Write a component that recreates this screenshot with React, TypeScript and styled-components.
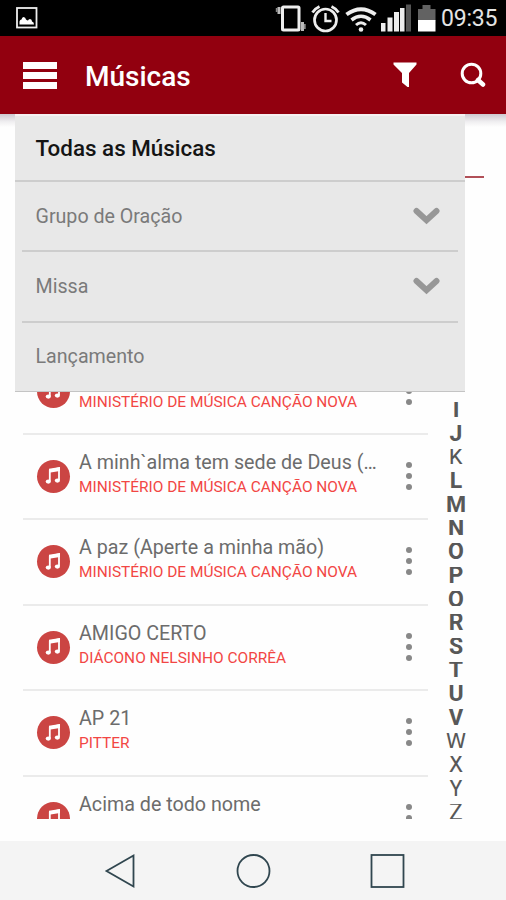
import React from 'react';
import styled, { createGlobalStyle } from 'styled-components';

const GlobalStyle = createGlobalStyle`
  * { box-sizing: border-box; }
  body { margin: 0; background: #fff; font-family: Roboto, "Liberation Sans", sans-serif; }
`;

const Screen = styled.div`
  width: 506px;
  height: 900px;
  display: flex;
  flex-direction: column;
  overflow: hidden;
  background: #fefefe;
`;

const StatusBar = styled.div`
  flex: 0 0 36px;
  display: flex;
  align-items: center;
  justify-content: space-between;
  padding: 0 9px 0 16px;
  background: #000;
`;

const StatusRight = styled.div`
  display: flex;
  align-items: center;
  height: 36px;
`;

const Clock = styled.span`
  width: 56px;
  margin-left: 5px;
  color: #e4e4e4;
  font-size: 23px;
  line-height: 36px;
  letter-spacing: -0.2px;
  padding-top: 2px;
  white-space: nowrap;
`;

const Header = styled.header`
  flex: 0 0 78px;
  display: flex;
  align-items: center;
  padding: 0 20px 0 23px;
  background: #92000f;
`;

const Burger = styled.button`
  display: flex;
  flex-direction: column;
  gap: 3px;
  width: 34px;
  padding: 0;
  border: 0;
  background: none;
`;

const BurgerBar = styled.span`
  height: 7px;
  background: #fff;
`;

const PageTitle = styled.h1`
  flex: 1;
  margin: 3px 0 0 28px;
  color: #fff;
  font-size: 28px;
  font-weight: 500;
  line-height: 40px;
`;

const HeaderIcons = styled.div`
  display: flex;
  align-items: center;
  gap: 43px;
`;

const Main = styled.main`
  flex: 0 0 705px;
  position: relative;
  display: flex;
  padding: 0 22px 0 23px;
  overflow: hidden;
`;

const HeaderShade = styled.div`
  position: absolute;
  top: 0;
  left: 0;
  right: 0;
  height: 13px;
  background: linear-gradient(#cdc9d0, #f0eff1 60%, #fefefe);
`;

const TabUnderline = styled.div`
  position: absolute;
  top: 62px;
  left: 23px;
  right: 22px;
  height: 2px;
  background: #b15058;
`;

const SongList = styled.ul`
  width: 405px;
  margin: 0;
  padding: 233.6px 0 0;
  list-style: none;
`;

const SongRow = styled.li`
  display: flex;
  height: 85.4px;
  padding: 17px 16px 0 14px;
  border-top: 2px solid #ebebeb;
`;

const Disc = styled.div`
  flex: 0 0 33px;
  height: 33px;
  margin-top: 8px;
  border-radius: 50%;
  background: #cb4543;
  display: flex;
  align-items: center;
  justify-content: center;
`;

const SongText = styled.div`
  flex: 1;
  min-width: 0;
  padding-left: 9px;
`;

const SongTitle = styled.div`
  height: 25px;
  color: #6c6c6c;
  font-size: 19.7px;
  line-height: 22px;
  white-space: nowrap;
`;

const Artist = styled.div`
  color: #f24644;
  font-size: 15.45px;
  line-height: 20px;
  white-space: nowrap;
`;

const MoreDots = styled.div`
  display: flex;
  flex-direction: column;
  gap: 5px;
  margin-top: 10px;
`;

const Dot = styled.span`
  width: 6px;
  height: 6px;
  border-radius: 50%;
  background: #888;
`;

const LetterIndex = styled.div`
  width: 28px;
  margin-left: 14px;
  padding-top: 287.5px;
`;

const Letter = styled.div<{ $strong: boolean }>`
  height: 15.5px;
  margin-bottom: 8.16px;
  overflow: hidden;
  color: #585858;
  font-size: 23px;
  font-weight: ${(p) => (p.$strong ? 700 : 400)};
  line-height: 17px;
  text-align: center;
`;

const FilterMenu = styled.div`
  position: absolute;
  top: 0;
  left: 14.5px;
  width: 450px;
  height: 278px;
  padding: 2px 7px 0;
  border-top: 2px solid #f6f0f1;
  border-bottom: 1.5px solid #c4c4c4;
  background: #e8e8e8;
`;

const MenuRow = styled.div<{ $heading?: boolean }>`
  display: flex;
  align-items: center;
  justify-content: space-between;
  height: ${(p) => (p.$heading ? 64 : 70.3)}px;
  margin: ${(p) => (p.$heading ? '0 -7px' : '0')};
  padding: ${(p) => (p.$heading ? '0 21px 3px 21px' : '0 18px 0 14px')};
  color: ${(p) => (p.$heading ? '#141414' : '#7a7a7a')};
  font-size: ${(p) => (p.$heading ? 22.4 : 19.65)}px;
  font-weight: ${(p) => (p.$heading ? 500 : 400)};
  border-bottom: 2px solid #cdcdcd;
  &:last-child {
    border-bottom: 0;
    padding-bottom: 3px;
  }
`;

const NavBar = styled.nav`
  flex: 0 0 59px;
  margin-top: 22px;
  display: flex;
  justify-content: space-between;
  align-items: center;
  padding: 1px 101px 0 104px;
  background: #f4f4f4;
`;

const PictureIcon = () => (
  <svg width="22" height="22" viewBox="0 0 22 22">
    <rect x="1" y="1" width="19.5" height="19.5" fill="none" stroke="#eee" strokeWidth="1.8" />
    <path d="M3.500 17.500V14.500Q4 12.500 5.500 12.500Q6 10 7.500 10Q9.500 10 10 12.500Q11 13.500 12 13.500Q12.500 12 14 12Q16 12 16 14.500Q18 15 18 17.500z" fill="#fff" />
  </svg>
);

const StatusIcons = () => (
  <svg width="161" height="36" viewBox="274 0 161 36">
    <g fill="none" stroke="#eee" strokeWidth="3">
      <rect x="281.5" y="7" width="16.500" height="23" rx="1" />
      <path d="M278 7v7M301.500 22v9" stroke="#bbb" />
      <path d="M275.700 8v4M303.800 24v5" stroke="#888" strokeWidth="1.800" />
      <circle cx="324.500" cy="20" r="11" strokeWidth="2.7" />
      <path d="M324.500 13v8h6" strokeWidth="2.4" />
      <path d="M311.500 12.500Q314 8.500 318.500 6.500M337.500 12.500Q335 8.500 330.500 6.500" strokeWidth="2.8" />
      <path d="M345.500 14.500Q360 4 374.500 14.500" strokeWidth="4" />
      <path d="M350.500 20Q360 12.500 369.500 20" strokeWidth="3.6" />
      <path d="M355 25Q360 20.500 365 25" strokeWidth="3" />
    </g>
    <circle cx="360" cy="29.500" r="2.300" fill="#eee" />
    <g fill="#ededed">
      <rect x="380" y="23" width="4.500" height="8.500" />
      <rect x="386.500" y="17.500" width="5" height="14" />
      <rect x="393" y="12" width="5" height="19.500" />
      <rect x="399" y="8" width="4.500" height="23.500" />
      <rect x="405" y="4.500" width="5" height="27" fill="#555" />
      <path d="M417 9h4.500V5h8v4h5v11.500h-17.500z" fill="#626262" />
      <rect x="417" y="20" width="17.500" height="11.500" fill="#fff" />
    </g>
  </svg>
);

const FunnelIcon = () => (
  <svg width="24" height="26" viewBox="0 0 24 26">
    <path d="M0.500 0.500H23.500V2.500L16 11V25H14.500L9 20.500V11L0.500 2.500Z" fill="#fff" />
  </svg>
);

const SearchIcon = () => (
  <svg width="26" height="26" viewBox="0 0 26 26">
    <circle cx="11.500" cy="11.500" r="9.300" fill="none" stroke="#fff" strokeWidth="3" />
    <path d="M18 18l5 4.500" stroke="#fff" strokeWidth="4.500" strokeLinecap="round" />
  </svg>
);

const ChevronIcon = () => (
  <svg width="27" height="18" viewBox="0 0 27 18">
    <path d="M3.500 4L13.500 13.200L23.500 4" fill="none" stroke="#979797" strokeWidth="6" strokeLinecap="round" />
  </svg>
);

const NoteIcon = () => (
  <svg width="17" height="18" viewBox="0 0 17 18">
    <path d="M4.800 14V3.500L14 1.200V13" fill="none" stroke="#fff" strokeWidth="1.800" />
    <path d="M4 1.800L15 0v4L4 5.800z" fill="#fff" />
    <ellipse cx="3.300" cy="14.600" rx="2.600" ry="2.100" fill="#fff" />
    <ellipse cx="12.400" cy="13.600" rx="2.600" ry="2.100" fill="#fff" />
  </svg>
);

const BackIcon = () => (
  <svg width="32" height="36" viewBox="0 0 32 36">
    <path d="M2.500 18L29.500 2.500v31z" fill="none" stroke="#30464f" strokeWidth="1.800" />
  </svg>
);

const HomeIcon = () => (
  <svg width="36" height="36" viewBox="0 0 36 36">
    <circle cx="18.500" cy="18" r="16" fill="none" stroke="#30464f" strokeWidth="1.800" />
  </svg>
);

const RecentIcon = () => (
  <svg width="36" height="36" viewBox="0 0 36 36">
    <rect x="2.500" y="2" width="32" height="32" fill="none" stroke="#30464f" strokeWidth="1.800" />
  </svg>
);

const ministry = 'MINISTÉRIO DE MÚSICA CANÇÃO NOVA';

const songs = [
  { title: '', artist: ministry },
  { title: 'A minh`alma tem sede de Deus (…', artist: ministry },
  { title: 'A paz (Aperte a minha mão)', artist: ministry },
  { title: 'AMIGO CERTO', artist: 'DIÁCONO NELSINHO CORRÊA' },
  { title: 'AP 21', artist: 'PITTER' },
  { title: 'Acima de todo nome', artist: '' },
];

const letters = 'IJKLMNOPQRSTUVWXYZ'.split('');
const lightLetters = 'KWXYZ';

const menu = [
  { label: 'Todas as Músicas', heading: true },
  { label: 'Grupo de Oração', expandable: true },
  { label: 'Missa', expandable: true },
  { label: 'Lançamento' },
];

export default function App() {
  return (
    <>
      <GlobalStyle />
      <Screen>
        <StatusBar>
          <PictureIcon />
          <StatusRight>
            <StatusIcons />
            <Clock>09:35</Clock>
          </StatusRight>
        </StatusBar>
        <Header>
          <Burger aria-label="Menu">
            <BurgerBar />
            <BurgerBar />
            <BurgerBar />
          </Burger>
          <PageTitle>Músicas</PageTitle>
          <HeaderIcons>
            <FunnelIcon />
            <SearchIcon />
          </HeaderIcons>
        </Header>
        <Main>
          <HeaderShade />
          <TabUnderline />
          <SongList>
            {songs.map((song, i) => (
              <SongRow key={i}>
                <Disc>
                  <NoteIcon />
                </Disc>
                <SongText>
                  <SongTitle>{song.title}</SongTitle>
                  <Artist>{song.artist}</Artist>
                </SongText>
                <MoreDots>
                  <Dot />
                  <Dot />
                  <Dot />
                </MoreDots>
              </SongRow>
            ))}
          </SongList>
          <LetterIndex>
            {letters.map((l) => (
              <Letter key={l} $strong={!lightLetters.includes(l)}>
                {l}
              </Letter>
            ))}
          </LetterIndex>
          <FilterMenu>
            {menu.map((item) => (
              <MenuRow key={item.label} $heading={item.heading}>
                <span>{item.label}</span>
                {item.expandable && <ChevronIcon />}
              </MenuRow>
            ))}
          </FilterMenu>
        </Main>
        <NavBar>
          <BackIcon />
          <HomeIcon />
          <RecentIcon />
        </NavBar>
      </Screen>
    </>
  );
}
